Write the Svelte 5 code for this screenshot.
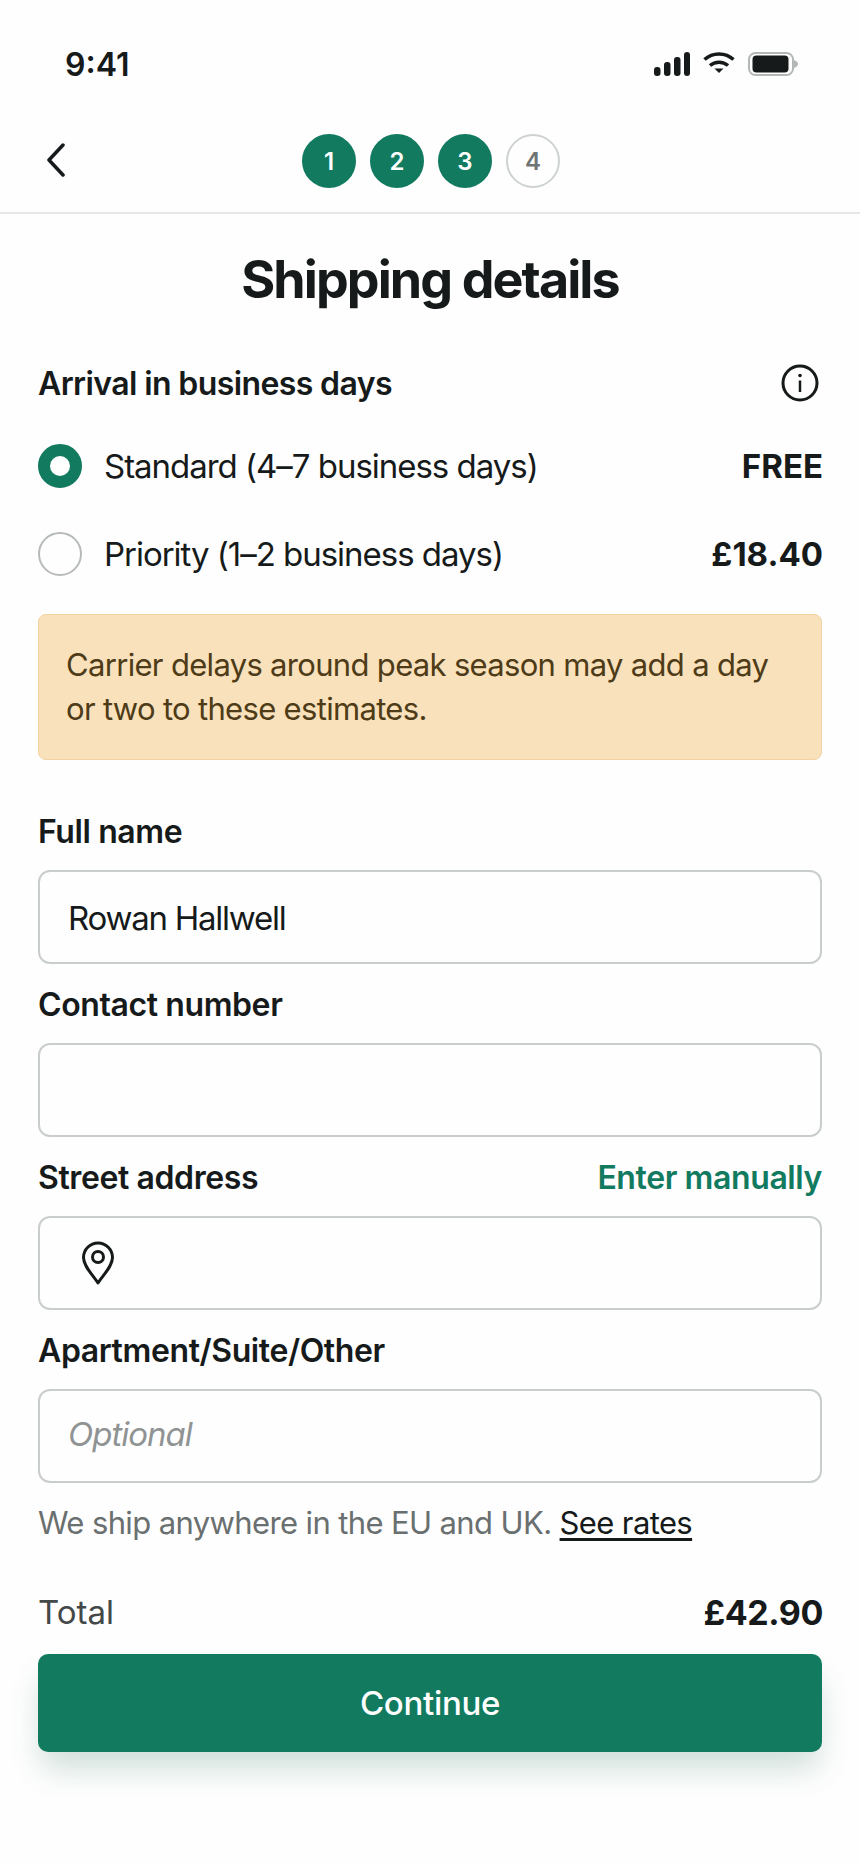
<script>
  const steps = [
    { n: 1, done: true },
    { n: 2, done: true },
    { n: 3, done: true },
    { n: 4, done: false }
  ];
</script>

<div class="page">
  <div class="status">
    <span class="time">9:41</span>
    <div class="status-icons">
      <svg width="36" height="24" viewBox="0 0 36 24" aria-hidden="true">
        <rect x="0" y="15" width="6.500" height="9" rx="3" fill="#161a1a" />
        <rect x="10" y="10" width="6.500" height="14" rx="3" fill="#161a1a" />
        <rect x="20" y="5" width="6.500" height="19" rx="3" fill="#161a1a" />
        <rect x="30" y="0" width="6" height="24" rx="3" fill="#161a1a" />
      </svg>
      <svg width="32" height="22" viewBox="0 0 32 22" aria-hidden="true">
        <path d="M1.500 7.500C9.500 0 22.500 0 30.500 7.500" fill="none" stroke="#161a1a" stroke-width="3.500" />
        <path d="M7 13.500C12 9 20 9 25 13.500" fill="none" stroke="#161a1a" stroke-width="3.500" />
        <path d="M11.500 16.500H20.500L16 21Z" fill="#161a1a" />
      </svg>
      <svg width="50" height="24" viewBox="0 0 50 24" aria-hidden="true">
        <rect x="1" y="1" width="44" height="22" rx="6.500" fill="none" stroke="#b4b7b7" stroke-width="2" />
        <rect x="4.500" y="3.500" width="36" height="17" rx="4" fill="#161a1a" />
        <path d="M46 8C48.500 9 50 10.500 50 12C50 13.500 48.500 15 46 16Z" fill="#b4b7b7" />
      </svg>
    </div>
  </div>

  <header class="nav">
    <button class="back" aria-label="Back">
      <svg width="20" height="34" viewBox="0 0 20 34" aria-hidden="true">
        <path d="M17 2L3 17L17 32" fill="none" stroke="#161a1a" stroke-width="3.500" stroke-linecap="round" stroke-linejoin="round" />
      </svg>
    </button>
    <ol class="steps">
      {#each steps as step}
        <li class="step" class:done={step.done}>{step.n}</li>
      {/each}
    </ol>
  </header>

  <main class="content">
    <h1>Shipping details</h1>

    <div class="arrival-head">
      <h2>Arrival in business days</h2>
      <svg class="info" width="38" height="38" viewBox="0 0 38 38" aria-hidden="true">
        <circle cx="19" cy="19" r="17" fill="none" stroke="#161a1a" stroke-width="3" />
        <circle cx="19" cy="11.500" r="1.800" fill="#161a1a" />
        <path d="M19 16.500V28" stroke="#161a1a" stroke-width="2.500" />
      </svg>
    </div>

    <div class="option">
      <span class="radio on"></span>
      <span class="opt-label">Standard (4–7 business days)</span>
      <strong>FREE</strong>
    </div>
    <div class="option">
      <span class="radio"></span>
      <span class="opt-label">Priority (1–2 business days)</span>
      <strong>£18.40</strong>
    </div>

    <div class="notice">Carrier delays around peak season may add a day or two to these estimates.</div>

    <div class="fields">
      <div class="label-row"><label for="n">Full name</label></div>
      <div class="input filled"><input id="n" value="Rowan Hallwell" /></div>

      <div class="label-row"><label for="c">Contact number</label></div>
      <div class="input"><input id="c" /></div>

      <div class="label-row"><label for="s">Street address</label><a href="#m">Enter manually</a></div>
      <div class="input with-icon">
        <svg width="34" height="44" viewBox="0 0 34 44" aria-hidden="true">
          <path d="M17 42C11 33 2.500 25 2.500 16.500A14.500 14.500 0 0 1 31.500 16.500C31.500 25 23 33 17 42Z" fill="none" stroke="#161a1a" stroke-width="3" stroke-linejoin="round" />
          <circle cx="17" cy="16" r="5.500" fill="none" stroke="#161a1a" stroke-width="3" />
        </svg>
        <input id="s" />
      </div>

      <div class="label-row"><label for="a">Apartment/Suite/Other</label></div>
      <div class="input optional"><input id="a" placeholder="Optional" /></div>
    </div>

    <p class="hint">We ship anywhere in the EU and UK. <a href="#r">See rates</a></p>

    <div class="total"><span>Total</span><strong>£42.90</strong></div>
    <button class="cta">Continue</button>
  </main>
</div>

<style>
  :global(body) {
    margin: 0;
    background: #fefefe;
  }
  .page {
    width: 860px;
    height: 1864px;
    overflow: hidden;
    font-family: Inter, "Liberation Sans", sans-serif;
    color: #161a1a;
    background: #fefefe;
  }
  .status {
    height: 128px;
    box-sizing: border-box;
    padding: 45px 62px 0 65px;
    display: flex;
    justify-content: space-between;
    align-items: flex-start;
  }
  .time {
    font-size: 32px;
    line-height: 40px;
    font-weight: 600;
  }
  .status-icons {
    display: flex;
    align-items: flex-start;
    gap: 13px;
    margin-top: 7px;
  }
  .nav {
    height: 86px;
    box-sizing: border-box;
    border-bottom: 2px solid #e6e8e8;
    position: relative;
    display: flex;
    justify-content: center;
    padding: 6px 0 0 2px;
  }
  .back {
    position: absolute;
    left: 46px;
    top: 15px;
    padding: 0;
    border: 0;
    background: none;
    line-height: 0;
  }
  .steps {
    list-style: none;
    margin: 0;
    padding: 0;
    display: flex;
    gap: 14px;
    height: 54px;
  }
  .step {
    width: 54px;
    height: 54px;
    box-sizing: border-box;
    border: 2px solid #cfd2d2;
    border-radius: 50%;
    display: flex;
    align-items: center;
    justify-content: center;
    font-size: 24px;
    font-weight: 600;
    color: #6f7575;
  }
  .step.done {
    background: #117a5f;
    border-color: #117a5f;
    color: #fff;
  }
  .content {
    padding: 0 38px;
  }
  h1 {
    margin: 35px 0 0;
    font-size: 52px;
    line-height: 62px;
    font-weight: 700;
    letter-spacing: -0.037em;
    text-align: center;
  }
  .arrival-head {
    display: flex;
    justify-content: space-between;
    align-items: center;
    margin-top: 50px;
    height: 44px;
  }
  .info {
    margin-right: 3px;
  }
  h2 {
    margin: 0;
    font-size: 32px;
    font-weight: 600;
    letter-spacing: -0.019em;
  }
  .option {
    display: flex;
    align-items: center;
    height: 44px;
    margin-top: 44px;
  }
  .arrival-head + .option {
    margin-top: 39px;
  }
  .radio {
    width: 44px;
    height: 44px;
    box-sizing: border-box;
    border: 2px solid #b7baba;
    border-radius: 50%;
    margin-right: 22px;
    flex: none;
  }
  .radio.on {
    border: 12px solid #117a5f;
    background: #fff;
  }
  .opt-label {
    flex: 1;
    font-size: 33px;
    letter-spacing: -0.031em;
  }
  strong {
    font-size: 33px;
    font-weight: 700;
    margin-right: -1px;
  }
  .notice {
    margin-top: 38px;
    box-sizing: border-box;
    height: 146px;
    padding: 28px 27px;
    background: #f9e1bc;
    border: 1px solid #f2d29f;
    border-radius: 8px;
    font-size: 31px;
    line-height: 44px;
    letter-spacing: -0.022em;
    color: #4e3b17;
  }
  .fields {
    margin-top: 53px;
  }
  .label-row {
    display: flex;
    justify-content: space-between;
    align-items: center;
    height: 38px;
    font-size: 32px;
    font-weight: 600;
    margin-bottom: 19px;
    padding-bottom: 1px;
    box-sizing: border-box;
    letter-spacing: -0.0125em;
  }
  .label-row a {
    color: #117a5f;
    text-decoration: none;
  }
  .input {
    height: 94px;
    box-sizing: border-box;
    border: 2px solid #c9cdcd;
    border-radius: 12px;
    display: flex;
    align-items: center;
    padding: 0 28px;
    margin-bottom: 22px;
  }
  .with-icon {
    padding-left: 41px;
    gap: 16px;
  }
  input {
    flex: 1;
    min-width: 0;
    border: 0;
    outline: 0;
    padding: 0;
    background: transparent;
    font: inherit;
    font-size: 33px;
    color: #161a1a;
    letter-spacing: -0.038em;
  }
  .filled input {
    padding-top: 2px;
  }
  .optional input {
    padding-bottom: 4px;
    letter-spacing: -0.031em;
  }
  input::placeholder {
    color: #8f9393;
    font-style: italic;
    opacity: 1;
  }
  .hint {
    margin: 0;
    margin-top: -4px;
    font-size: 31px;
    line-height: 44px;
    letter-spacing: -0.02em;
    color: #6a6f6f;
  }
  .hint a {
    color: #161a1a;
    text-decoration: underline;
    text-underline-offset: 4px;
  }
  .total {
    margin-top: 45px;
    display: flex;
    justify-content: space-between;
    align-items: center;
    height: 44px;
    font-size: 33px;
    color: #444848;
  }
  .total strong {
    color: #161a1a;
    font-size: 34px;
    letter-spacing: -0.012em;
  }
  .cta {
    display: block;
    width: 100%;
    height: 98px;
    margin-top: 20px;
    border: 0;
    border-radius: 10px;
    background: #117a5f;
    color: #fff;
    font: inherit;
    font-size: 33px;
    font-weight: 500;
    letter-spacing: -0.01em;
    box-shadow: 0 20px 32px -4px rgba(17, 90, 70, 0.2);
  }
</style>
